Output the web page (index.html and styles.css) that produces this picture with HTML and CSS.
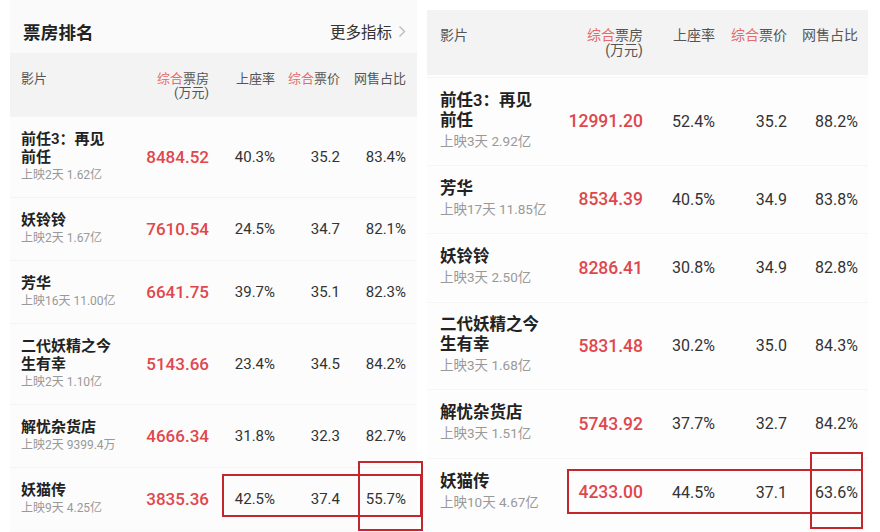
FILE: index.html
```html
<!DOCTYPE html>
<html lang="zh">
<head>
<meta charset="utf-8">
<link rel="stylesheet" href="styles.css">
</head>
<body>
<div class="page">
  <section class="panel panel-left">
    <div class="titlebar">
      <h1 class="title">票房排名</h1>
      <div class="more">更多指标<svg class="chev" width="8" height="13" viewBox="0 0 8 13"><path d="M1.5 1.5 L6.5 6.5 L1.5 11.5" fill="none" stroke="#bbb" stroke-width="1.4"/></svg></div>
    </div>
    <div class="head">
      <div class="h-name">影片</div>
      <div class="h-num"><span class="red">综合</span>票房<br>(万元)</div>
      <div class="h-num">上座率</div>
      <div class="h-num"><span class="red">综合</span>票价</div>
      <div class="h-num">网售占比</div>
    </div>
    <div class="row tall">
      <div class="name"><div class="t">前任3：再见<br>前任</div><div class="sub">上映2天 1.62亿</div></div>
      <div class="num red">8484.52</div><div class="val">40.3%</div><div class="val">35.2</div><div class="val">83.4%</div>
    </div>
    <div class="row">
      <div class="name"><div class="t">妖铃铃</div><div class="sub">上映2天 1.67亿</div></div>
      <div class="num red">7610.54</div><div class="val">24.5%</div><div class="val">34.7</div><div class="val">82.1%</div>
    </div>
    <div class="row">
      <div class="name"><div class="t">芳华</div><div class="sub">上映16天 11.00亿</div></div>
      <div class="num red">6641.75</div><div class="val">39.7%</div><div class="val">35.1</div><div class="val">82.3%</div>
    </div>
    <div class="row tall">
      <div class="name"><div class="t">二代妖精之今<br>生有幸</div><div class="sub">上映2天 1.10亿</div></div>
      <div class="num red">5143.66</div><div class="val">23.4%</div><div class="val">34.5</div><div class="val">84.2%</div>
    </div>
    <div class="row">
      <div class="name"><div class="t">解忧杂货店</div><div class="sub">上映2天 9399.4万</div></div>
      <div class="num red">4666.34</div><div class="val">31.8%</div><div class="val">32.3</div><div class="val">82.7%</div>
    </div>
    <div class="row">
      <div class="name"><div class="t">妖猫传</div><div class="sub">上映9天 4.25亿</div></div>
      <div class="num red">3835.36</div><div class="val">42.5%</div><div class="val">37.4</div><div class="val">55.7%</div>
    </div>
  </section>

  <section class="panel panel-right">
    <div class="head">
      <div class="h-name">影片</div>
      <div class="h-num"><span class="red">综合</span>票房<br>(万元)</div>
      <div class="h-num">上座率</div>
      <div class="h-num"><span class="red">综合</span>票价</div>
      <div class="h-num">网售占比</div>
    </div>
    <div class="row tall">
      <div class="name"><div class="t">前任3：再见<br>前任</div><div class="sub">上映3天 2.92亿</div></div>
      <div class="num red">12991.20</div><div class="val">52.4%</div><div class="val">35.2</div><div class="val">88.2%</div>
    </div>
    <div class="row">
      <div class="name"><div class="t">芳华</div><div class="sub">上映17天 11.85亿</div></div>
      <div class="num red">8534.39</div><div class="val">40.5%</div><div class="val">34.9</div><div class="val">83.8%</div>
    </div>
    <div class="row">
      <div class="name"><div class="t">妖铃铃</div><div class="sub">上映3天 2.50亿</div></div>
      <div class="num red">8286.41</div><div class="val">30.8%</div><div class="val">34.9</div><div class="val">82.8%</div>
    </div>
    <div class="row tall">
      <div class="name"><div class="t">二代妖精之今<br>生有幸</div><div class="sub">上映3天 1.68亿</div></div>
      <div class="num red">5831.48</div><div class="val">30.2%</div><div class="val">35.0</div><div class="val">84.3%</div>
    </div>
    <div class="row">
      <div class="name"><div class="t">解忧杂货店</div><div class="sub">上映3天 1.51亿</div></div>
      <div class="num red">5743.92</div><div class="val">37.7%</div><div class="val">32.7</div><div class="val">84.2%</div>
    </div>
    <div class="row">
      <div class="name"><div class="t">妖猫传</div><div class="sub">上映10天 4.67亿</div></div>
      <div class="num red">4233.00</div><div class="val">44.5%</div><div class="val">37.1</div><div class="val">63.6%</div>
    </div>
  </section>

  <div class="mark mark-l1"></div>
  <div class="mark mark-l2"></div>
  <div class="mark mark-r1"></div>
  <div class="mark mark-r2"></div>
</div>
</body>
</html>
```

FILE: styles.css
```css
* { box-sizing: border-box; }
html, body { margin: 0; padding: 0; background: #fff; }
body {
  width: 880px;
  height: 532px;
  overflow: hidden;
  font-family: Roboto, "Noto Sans CJK SC", sans-serif;
  color: #333;
}
.page {
  position: relative;
  display: flex;
  align-items: flex-start;
  gap: 10px;
  padding-left: 10px;
  height: 532px;
}
.panel { display: flex; flex-direction: column; }
.red { color: #e0474c; }

/* ---------- left panel ---------- */
.panel-left {
  width: 407px;
  height: 532px;
  background: #fafafa;
}
.titlebar {
  height: 53px;
  display: flex;
  align-items: center;
  justify-content: space-between;
  padding: 9px 11px 0 13px;
}
.title {
  margin: 0;
  font-size: 17.5px;
  font-weight: 700;
  color: #222;
  letter-spacing: 0.2px;
}
.more {
  display: flex;
  align-items: center;
  gap: 6px;
  font-size: 15.5px;
  color: #333;
}
.chev { display: block; }

.head, .row {
  display: grid;
  align-items: center;
}
.panel-left .head, .panel-left .row {
  grid-template-columns: 109px 79px 66px 65px 66px;
  padding: 0 11px;
}
.head { align-items: start; background: #f3f3f3; color: #555; }
.panel-left .head {
  height: 63px;
  padding-top: 19px;
  font-size: 13px;
  line-height: 14px;
}
.h-num { text-align: right; }
.h-num .red { color: #e56a6c; }

.panel-left .row { height: 63px; background: #fcfcfc; border-top: 1px solid #f4f4f4; }
.panel-left .row.tall { height: 81px; }
.name .t {
  font-weight: 600;
  color: #222;
}
.panel-left .name .t { font-size: 15px; line-height: 18px; }
.panel-left .name .sub { font-size: 12px; line-height: 19px; color: #999; }
.num { text-align: right; font-weight: 500; }
.val { text-align: right; color: #333; }
.panel-left .num { font-size: 17px; }
.panel-left .val { font-size: 15px; }

/* ---------- right panel ---------- */
.panel-right {
  width: 441px;
  margin-top: 10px;
  height: 522px;
  background: #fdfdfd;
}
.panel-right .head, .panel-right .row {
  grid-template-columns: 115px 88px 72px 72px 71px;
  padding: 0 10px 0 13px;
}
.panel-right .head {
  height: 65px;
  margin-bottom: 2px;
  padding-top: 18px;
  font-size: 14px;
  line-height: 15px;
}
.panel-right .row { height: 68.5px; border-top: 1px solid #f6f6f6; }
.panel-right .row.tall { height: 87.5px; }
.panel-right .name .t { font-size: 16.5px; line-height: 20px; }
.panel-right .name .sub { font-size: 13.5px; line-height: 21px; color: #999; }
.panel-right .num { font-size: 17.5px; }
.panel-right .val { font-size: 16px; }

/* ---------- annotation boxes ---------- */
.mark {
  position: absolute;
  border: 2px solid #c1272d;
}
.mark-l1 { left: 222px; top: 474px; width: 200px; height: 43px; }
.mark-l2 { left: 358px; top: 461px; width: 65px; height: 70px; }
.mark-r1 { left: 567px; top: 469px; width: 296px; height: 45px; }
.mark-r2 { left: 810px; top: 452px; width: 53px; height: 77px; }
```
